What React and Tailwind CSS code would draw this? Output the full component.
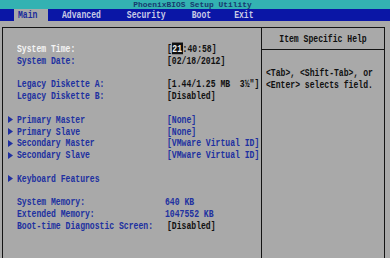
import React from "react";

const Arrow = () => (
  <svg width="5" height="7" viewBox="0 0 5 7" className="block">
    <path d="M0 0 L5 3.5 L0 7 Z" fill="#2030a0" />
  </svg>
);

const Glyphs = ({ children, className = "" }) => (
  <span className={`inline-block scale-y-[1.3] whitespace-pre ${className}`}>
    {children}
  </span>
);

const Row = ({ arrow, label, labelColor = "text-[#2030a0]", value, valueColor = "text-[#101010]", valueShift = "" }) => (
  <div className="flex h-[11.8px] items-center">
    <div className="w-[14px] pl-[5px] flex items-center">
      {arrow && <Arrow />}
    </div>
    <div className={`w-[150px] ${labelColor}`}>
      {label && <Glyphs>{label}</Glyphs>}
    </div>
    <div className={`${valueColor} ${valueShift}`}>
      {value}
    </div>
  </div>
);

const Blank = () => <div className="h-[11.8px]"></div>;

export default function App() {
  return (
    <div className="w-[390px] h-[258px] overflow-hidden bg-[#a9a9a9] flex flex-col font-['Liberation_Mono',monospace] font-bold text-[8.1px] leading-[11.8px]">

      {/* TITLE BAR */}

      <div className="h-[9px] bg-[#33b2b2] flex items-center justify-center pr-[5px] text-[#163a6e] text-[7.9px] leading-[9px]">
        <span className="inline-block whitespace-pre">PhoenixBIOS Setup Utility</span>
      </div>

      {/* MENU BAR */}

      <div className="h-[12px] bg-[#0a16a6] flex items-center text-[#c8cbe6]">
        <div className="ml-[14px] w-[34px] h-full bg-[#a9a9a9] pl-[4px] flex items-center text-[#1a2a9a]">
          <Glyphs>Main</Glyphs>
        </div>
        <div className="ml-[14px]"><Glyphs>Advanced</Glyphs></div>
        <div className="ml-[26px]"><Glyphs>Security</Glyphs></div>
        <div className="ml-[26px]"><Glyphs>Boot</Glyphs></div>
        <div className="ml-[23px]"><Glyphs>Exit</Glyphs></div>
      </div>

      {/* FRAME */}

      <div className="mt-[6px] ml-[2px] w-[383px] flex-1 flex border-t border-l border-r border-[#141414]">

        {/* LEFT PANEL */}

        <div className="w-[259px] pt-[15px] border-r border-[#141414]">

          <Row
            label="System Time:"
            labelColor="text-[#f4f4f4]"
            value={
              <Glyphs>
                [<span className="bg-[#101010] text-[#f0f0f0] px-[0.5px]">21</span>:40:58]
              </Glyphs>
            }
          />
          <Row label="System Date:" value={<Glyphs>[02/18/2012]</Glyphs>} />
          <Blank />
          <Row label="Legacy Diskette A:" value={<Glyphs>[1.44/1.25 MB  3½"]</Glyphs>} />
          <Row label="Legacy Diskette B:" value={<Glyphs>[Disabled]</Glyphs>} />
          <Blank />
          <Row arrow label="Primary Master" valueColor="text-[#2030a0]" value={<Glyphs>[None]</Glyphs>} />
          <Row arrow label="Primary Slave" valueColor="text-[#2030a0]" value={<Glyphs>[None]</Glyphs>} />
          <Row arrow label="Secondary Master" valueColor="text-[#2030a0]" value={<Glyphs>[VMware Virtual ID]</Glyphs>} />
          <Row arrow label="Secondary Slave" valueColor="text-[#2030a0]" value={<Glyphs>[VMware Virtual ID]</Glyphs>} />
          <Blank />
          <Row arrow label="Keyboard Features" />
          <Blank />
          <Row label="System Memory:" valueColor="text-[#2030a0]" valueShift="-ml-[2px]" value={<Glyphs>640 KB</Glyphs>} />
          <Row label="Extended Memory:" valueColor="text-[#2030a0]" valueShift="-ml-[2px]" value={<Glyphs>1047552 KB</Glyphs>} />
          <Row label="Boot-time Diagnostic Screen:" value={<Glyphs>[Disabled]</Glyphs>} />

        </div>

        {/* HELP PANEL */}

        <div className="flex-1 flex flex-col text-[#101010]">

          <div className="h-[22px] border-b border-[#141414] flex items-center justify-center">
            <Glyphs>Item Specific Help</Glyphs>
          </div>

          <div className="pt-[17px] pl-[4px]">
            <div><Glyphs>{"<Tab>, <Shift-Tab>, or"}</Glyphs></div>
            <div><Glyphs>{"<Enter> selects field."}</Glyphs></div>
          </div>

        </div>

      </div>

    </div>
  );
}
